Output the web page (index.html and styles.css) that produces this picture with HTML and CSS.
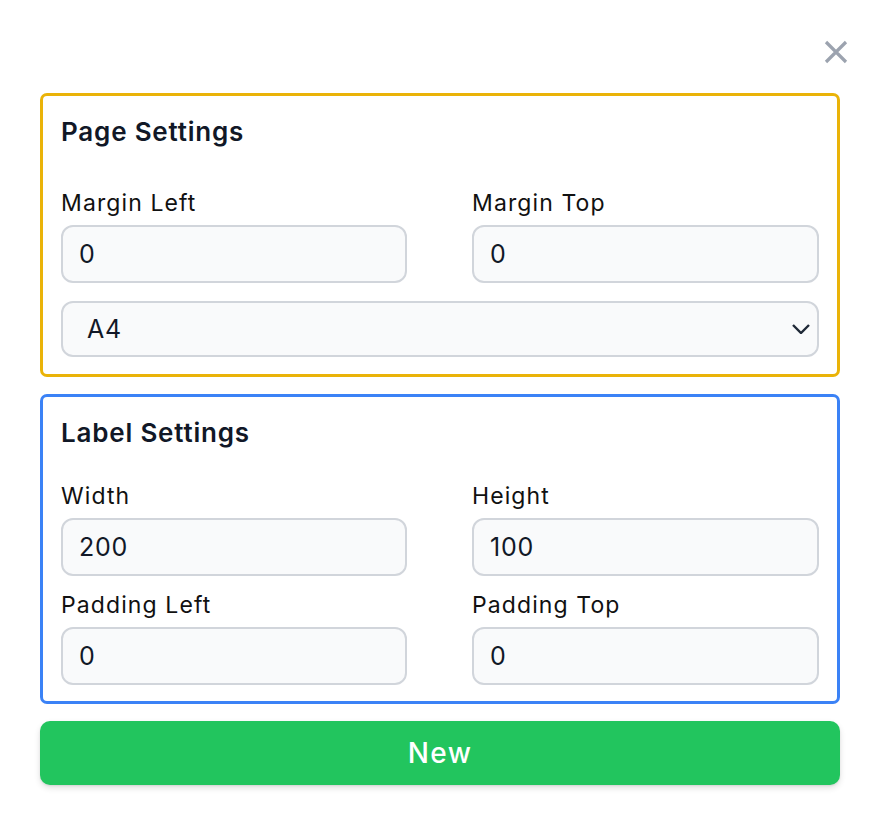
FILE: index.html
```html
<!DOCTYPE html>
<html lang="en">
<head>
<meta charset="utf-8">
<title>Settings</title>
<link rel="stylesheet" href="styles.css">
</head>
<body>
<div class="modal">
  <button class="close" aria-label="Close">
    <svg width="24" height="24" viewBox="0 0 24 24" fill="none" stroke="#9ca3af" stroke-width="3.2" stroke-linecap="butt"><path d="M2 2L22 22M22 2L2 22"/></svg>
  </button>
  <div class="content">
    <section class="panel panel-page">
      <h2 class="panel-title">Page Settings</h2>
      <div class="grid grid-page">
        <div class="field">
          <label class="label">Margin Left</label>
          <input class="input" type="text" value="0">
        </div>
        <div class="field">
          <label class="label">Margin Top</label>
          <input class="input" type="text" value="0">
        </div>
      </div>
      <div class="select">
        <span class="select-value">A4</span>
        <svg class="chevron" width="18" height="10" viewBox="0 0 18 10" fill="none" stroke="#1f2937" stroke-width="2.4"><path d="M1 1L9 9L17 1"/></svg>
      </div>
    </section>
    <section class="panel panel-label">
      <h2 class="panel-title">Label Settings</h2>
      <div class="grid grid-label">
        <div class="field">
          <label class="label">Width</label>
          <input class="input" type="text" value="200">
        </div>
        <div class="field">
          <label class="label">Height</label>
          <input class="input" type="text" value="100">
        </div>
        <div class="field">
          <label class="label">Padding Left</label>
          <input class="input" type="text" value="0">
        </div>
        <div class="field">
          <label class="label">Padding Top</label>
          <input class="input" type="text" value="0">
        </div>
      </div>
    </section>
    <button class="btn-new">New</button>
  </div>
</div>
</body>
</html>
```
FILE: styles.css
```css
* { box-sizing: border-box; }
html, body { margin: 0; padding: 0; background: #ffffff; }
body { font-family: Inter, "Noto Sans", "DejaVu Sans", sans-serif; color: #111827; }

.modal {
  position: relative;
  width: 872px;
  height: 818px;
  padding: 93px 32px 0 40px;
}

.close {
  position: absolute;
  top: 40px;
  left: 824px;
  width: 24px;
  height: 24px;
  padding: 0;
  border: 0;
  background: transparent;
  display: flex;
}

.content {
  width: 800px;
  display: flex;
  flex-direction: column;
  gap: 17px;
}

.panel {
  border: 3px solid;
  border-radius: 7px;
  padding: 20px 18px 17px;
}
.panel-page { border-color: #eab308; }
.panel-label { border-color: #3b82f6; padding-bottom: 16px; }

.panel-title {
  margin: 0;
  font-size: 26px;
  line-height: 32px;
  font-weight: 600;
  letter-spacing: 0.8px;
  color: #111827;
}
.panel-page .panel-title { margin-bottom: 41px; }
.panel-label .panel-title { margin-bottom: 33px; }

.grid {
  display: grid;
  grid-template-columns: 346px 347px;
  column-gap: 65px;
  row-gap: 15px;
}
.grid-page { margin-bottom: 18px; }

.field { display: flex; flex-direction: column; }

.label {
  font-size: 23px;
  line-height: 28px;
  letter-spacing: 1.1px;
  color: #111111;
  margin-bottom: 8px;
}

.input {
  height: 58px;
  border: 2px solid #d1d5db;
  border-radius: 12px;
  background: #f9fafb;
  padding: 0 16px;
  font-family: inherit;
  font-size: 25px;
  letter-spacing: 0.8px;
  color: #111827;
  width: 100%;
  outline: none;
}

.select {
  height: 56px;
  border: 2px solid #d1d5db;
  border-radius: 12px;
  background: #f9fafb;
  padding: 0 7px 0 24px;
  display: flex;
  align-items: center;
  justify-content: space-between;
}
.select-value { font-size: 25px; letter-spacing: 0.8px; color: #111827; }

.btn-new {
  height: 64px;
  border: 0;
  border-radius: 10px;
  background: #22c55e;
  color: #ffffff;
  font-family: inherit;
  font-size: 28px;
  font-weight: 500;
  letter-spacing: 1.4px;
  box-shadow: 0 3px 6px rgba(0, 0, 0, 0.12), 0 1px 2px rgba(0, 0, 0, 0.08);
  width: 100%;
}
```
